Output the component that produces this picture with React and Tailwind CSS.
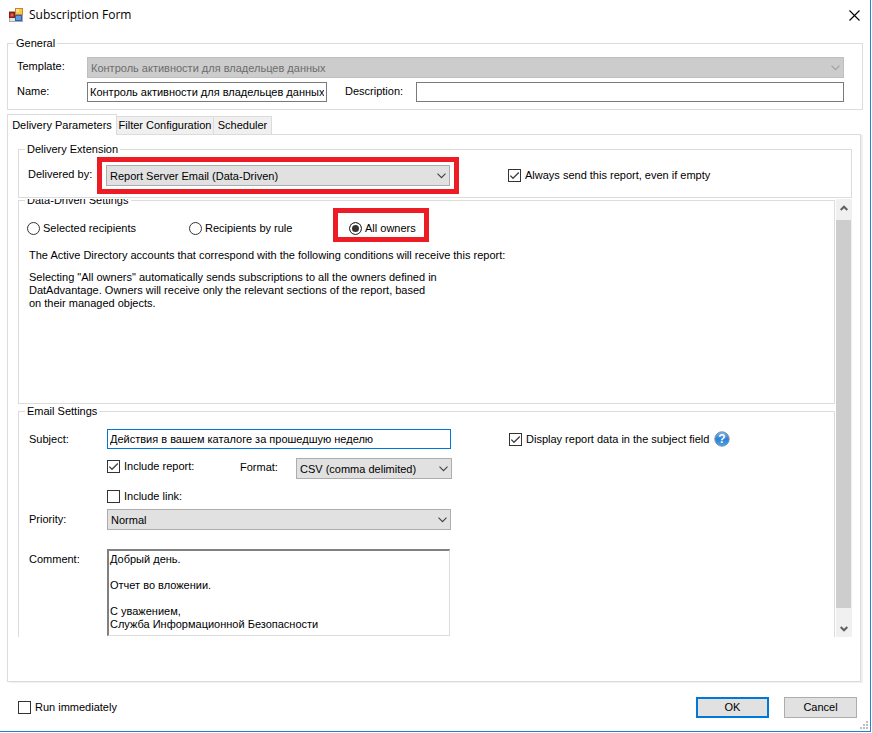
import React, { useState } from 'react';

const Chevron = ({ className }) => (
  <svg viewBox="0 0 9 6" fill="none" strokeWidth="1.1" className={`pointer-events-none absolute top-1/2 right-[4px] h-[6px] w-[9px] -translate-y-1/2 ${className}`}>
    <path d="M0.5 0.7 L4.5 4.7 L8.5 0.7" />
  </svg>
);

const Select = ({ id, options, disabled, className = '' }) => (
  <div className={`relative h-[21px] ${className}`}>
    <select
      id={id}
      disabled={disabled}
      className="block h-full w-full appearance-none border border-[#adadad] bg-[#e1e1e1] pt-[1px] pr-5 pl-[3px] text-black disabled:border-[#bfbfbf] disabled:bg-[#cccccc] disabled:text-[#6d6d6d] disabled:opacity-100"
    >
      {options.map((option) => (
        <option key={option}>{option}</option>
      ))}
    </select>
    <Chevron className={disabled ? 'stroke-[#a0a0a0]' : 'stroke-[#404040]'} />
  </div>
);

const Checkbox = ({ label, defaultChecked }) => (
  <label className="flex items-center gap-[4px] whitespace-nowrap">
    <span className="relative block size-[13px] shrink-0">
      <input type="checkbox" defaultChecked={defaultChecked} className="peer block size-[13px] appearance-none border border-[#333333] bg-white" />
      <svg viewBox="0 0 13 13" fill="none" stroke="#404040" strokeWidth="1.3" className="pointer-events-none absolute inset-0 hidden peer-checked:block">
        <path d="M2.3 6.6 L5 9.3 L10.8 3.5" />
      </svg>
    </span>
    {label}
  </label>
);

const Radio = ({ label, value, selected, onSelect, className = '', children }) => (
  <label className={`flex items-center gap-[3px] whitespace-nowrap ${className}`}>
    <input
      type="radio"
      name="recipients"
      checked={selected === value}
      onChange={() => onSelect(value)}
      className="block size-[13px] shrink-0 appearance-none rounded-full border border-[#333333] bg-white checked:bg-[#333333] checked:shadow-[inset_0_0_0_2px_#ffffff]"
    />
    {label}
    {children}
  </label>
);

const Group = ({ title, className = '', bodyClassName = '', children }) => (
  <fieldset className={`min-w-0 border border-[#dcdcdc] ${className}`}>
    <legend className="ml-[6px] h-[13px] px-[2px] leading-[13px]">{title}</legend>
    <div className={bodyClassName}>{children}</div>
  </fieldset>
);

const AppIcon = () => (
  <svg viewBox="0 0 14 14" className="size-[14px] shrink-0">
    <rect x="0.5" y="3.5" width="13" height="10" fill="#e4e4e4" stroke="#a9a9a9" />
    <rect x="0" y="4" width="6" height="6" fill="#8e1c10" />
    <rect x="1.5" y="5.5" width="3" height="3" fill="#e0654a" />
    <rect x="6" y="0" width="8" height="7" fill="#c98a1b" />
    <rect x="7" y="1" width="6" height="5" fill="#fbc54e" />
    <rect x="7" y="1" width="3" height="3" fill="#fde08f" />
    <rect x="6" y="7" width="7" height="6" fill="#2a62b4" />
    <rect x="7" y="8" width="5" height="4" fill="#5c9ae6" />
  </svg>
);

const HelpIcon = () => (
  <svg viewBox="0 0 16 16" className="size-[16px] shrink-0">
    <defs>
      <linearGradient id="helpFill" x1="0" y1="0" x2="0" y2="1">
        <stop offset="0" stopColor="#7fb8ee" />
        <stop offset="0.5" stopColor="#2f7fd3" />
        <stop offset="1" stopColor="#3fa9f5" />
      </linearGradient>
    </defs>
    <circle cx="8" cy="8" r="7.2" fill="url(#helpFill)" stroke="#7d8fa3" strokeWidth="1" />
    <text x="8" y="12.2" textAnchor="middle" fontSize="12" fontWeight="700" fill="#ffffff">?</text>
  </svg>
);

const tabs = [
  { name: 'Delivery Parameters', width: 'w-[110px]' },
  { name: 'Filter Configuration', width: 'w-[97px]' },
  { name: 'Scheduler', width: 'w-[58px]' },
];

const comment = 'Добрый день.\n\nОтчет во вложении.\n\nС уважением,\nСлужба Информационной Безопасности';

const App = () => {
  const [tab, setTab] = useState('Delivery Parameters');
  const [recipients, setRecipients] = useState('owners');

  return (
    <div className="h-screen min-h-[520px] bg-white pr-[1px] pb-[1px] font-['Liberation_Sans',Arial,sans-serif] text-[11px] leading-[13px] text-black">
      <div className="flex h-full flex-col border-r border-b border-[#1883d7]">
        <header className="flex h-[30px] shrink-0 items-center justify-between pr-[10px] pl-[9px]">
          <div className="flex items-center gap-[6px]">
            <AppIcon />
            <h1 className="font-['Open_Sans','Noto_Sans',sans-serif] text-[12px] leading-[16px]">Subscription Form</h1>
          </div>
          <button type="button" aria-label="Close" className="block size-[11px]">
            <svg viewBox="0 0 11 11" stroke="#000000" strokeWidth="1.1" className="block size-[11px]">
              <path d="M0.5 0.5 L10.5 10.5 M10.5 0.5 L0.5 10.5" />
            </svg>
          </button>
        </header>

        <form className="flex min-h-0 flex-1 flex-col pt-[7px]" onSubmit={(e) => e.preventDefault()}>
          <Group title="General" className="mx-[7px] shrink-0" bodyClassName="pt-[7px] pr-[18px] pb-[7px] pl-[9px]">
            <div className="flex">
              <label htmlFor="template" className="w-[70px] shrink-0 pt-[3px]">Template:</label>
              <Select id="template" disabled className="flex-1" options={['Контроль активности для владельцев данных']} />
            </div>
            <div className="mt-[4px] flex">
              <label htmlFor="name" className="w-[70px] shrink-0 pt-[3px]">Name:</label>
              <input id="name" defaultValue="Контроль активности для владельцев данных" className="h-[20px] w-[240px] border border-[#7a7a7a] px-[2px]" />
              <label htmlFor="description" className="ml-[18px] w-[71px] shrink-0 pt-[3px]">Description:</label>
              <input id="description" className="h-[20px] min-w-0 flex-1 border border-[#7a7a7a] px-[2px]" />
            </div>
          </Group>

          <div role="tablist" className="mt-[4px] ml-[7px] flex shrink-0 items-end">
            {tabs.map(({ name, width }) => (
              <button
                key={name}
                type="button"
                role="tab"
                aria-selected={tab === name}
                onClick={() => setTab(name)}
                className={`whitespace-nowrap ${width} ${
                  tab === name
                    ? 'relative -mb-[1px] h-[21px] border border-b-0 border-[#dcdcdc] bg-white'
                    : 'h-[18px] border-t border-r border-[#dcdcdc] bg-[#f0f0f0]'
                }`}
              >
                {name}
              </button>
            ))}
          </div>

          <div role="tabpanel" className="mr-[9px] ml-[7px] flex min-h-0 flex-1 flex-col border border-[#dcdcdc] pt-[8px] pr-[8px] pb-[44px] pl-[10px] shadow-[2px_1px_0_#f0f0f0]">
            <Group title="Delivery Extension" className="shrink-0" bodyClassName="pt-[9px] pb-[11px] pl-[9px]">
              <div className="flex">
                <label htmlFor="delivery" className="w-[78px] shrink-0 pt-[3px]">Delivered by:</label>
                <div className="relative w-[344px]">
                  <Select id="delivery" options={['Report Server Email (Data-Driven)']} />
                  <span className="pointer-events-none absolute -inset-x-[9px] -inset-y-[8px] border-5 border-[#ed1c24]" />
                </div>
                <div className="ml-[58px] flex items-center">
                  <Checkbox label="Always send this report, even if empty" defaultChecked />
                </div>
              </div>
            </Group>

            <div className="mt-[1px] flex min-h-0 flex-1 gap-[1px]">
              <div className="min-w-0 flex-1 overflow-hidden">
                <Group title="Data-Driven Settings" className="-mt-[5px] h-[210px]" bodyClassName="pt-[15px] pl-[8px]">
                  <div className="flex">
                    <Radio label="Selected recipients" value="selected" selected={recipients} onSelect={setRecipients} className="w-[162px]" />
                    <Radio label="Recipients by rule" value="rule" selected={recipients} onSelect={setRecipients} className="w-[160px]" />
                    <Radio label="All owners" value="owners" selected={recipients} onSelect={setRecipients} className="relative">
                      <span className="pointer-events-none absolute -top-[14px] -bottom-[7px] -left-[16px] w-[96px] border-5 border-[#ed1c24]" />
                    </Radio>
                  </div>
                  <p className="mt-[14px] ml-[2px]">The Active Directory accounts that correspond with the following conditions will receive this report:</p>
                  <p className="mt-[9px] ml-[2px]">
                    Selecting "All owners" automatically sends subscriptions to all the owners defined in
                    <br />
                    DatAdvantage. Owners will receive only the relevant sections of the report, based
                    <br />
                    on their managed objects.
                  </p>
                </Group>

                <Group title="Email Settings" className="mt-[1px] h-[260px]" bodyClassName="pt-[11px] pl-[10px]">
                  <div className="flex">
                    <label htmlFor="subject" className="w-[78px] shrink-0 pt-[4px]">Subject:</label>
                    <input id="subject" defaultValue="Действия в вашем каталоге за прошедшую неделю" className="h-[20px] w-[344px] border border-[#0078d7] px-[2px]" />
                    <div className="ml-[58px] flex items-center gap-[5px]">
                      <Checkbox label="Display report data in the subject field" defaultChecked />
                      <HelpIcon />
                    </div>
                  </div>
                  <div className="mt-[9px] flex pl-[78px]">
                    <div className="w-[133px] pt-[2px]">
                      <Checkbox label="Include report:" defaultChecked />
                    </div>
                    <label htmlFor="format" className="w-[56px] pt-[3px]">Format:</label>
                    <Select id="format" className="w-[156px]" options={['CSV (comma delimited)']} />
                  </div>
                  <div className="mt-[11px] flex pl-[78px]">
                    <Checkbox label="Include link:" />
                  </div>
                  <div className="mt-[6px] flex">
                    <label htmlFor="priority" className="w-[78px] shrink-0 pt-[4px]">Priority:</label>
                    <Select id="priority" className="w-[344px]" options={['Normal', 'High', 'Low']} />
                  </div>
                  <div className="mt-[19px] flex">
                    <label htmlFor="comment" className="w-[78px] shrink-0 pt-[4px]">Comment:</label>
                    <textarea
                      id="comment"
                      defaultValue={comment}
                      className="h-[87px] w-[343px] resize-none overflow-hidden border-t-2 border-r border-b border-l-2 border-t-[#808080] border-r-[#dcdcdc] border-b-[#dcdcdc] border-l-[#808080] pt-[2px] pl-[1px] leading-[13px]"
                    />
                  </div>
                </Group>
              </div>

              <div className="flex w-[16px] shrink-0 flex-col bg-[#f0f0f0]">
                <button type="button" aria-label="Scroll up" className="flex h-[21px] items-center justify-center pb-[3px]">
                  <svg viewBox="0 0 8 6" fill="none" stroke="#606060" strokeWidth="2" className="h-[6px] w-[8px]">
                    <path d="M0.7 5 L4 1.7 L7.3 5" />
                  </svg>
                </button>
                <div className="mr-[1px] flex-1 bg-[#cdcdcd]" />
                <button type="button" aria-label="Scroll down" className="flex h-[29px] items-center justify-center pt-[13px]">
                  <svg viewBox="0 0 8 6" fill="none" stroke="#606060" strokeWidth="2" className="h-[6px] w-[8px]">
                    <path d="M0.7 1 L4 4.3 L7.3 1" />
                  </svg>
                </button>
              </div>
            </div>
          </div>

          <footer className="relative flex shrink-0 items-center justify-between pt-[15px] pr-[13px] pb-[13px] pl-[18px]">
            <Checkbox label="Run immediately" />
            <div className="flex gap-[15px]">
              <button type="submit" className="h-[21px] w-[73px] border-2 border-[#0078d7] bg-[#e1e1e1]">OK</button>
              <button type="button" className="h-[21px] w-[73px] border border-[#adadad] bg-[#e1e1e1]">Cancel</button>
            </div>
            <svg viewBox="0 0 8 8" fill="#bfbfbf" className="absolute right-[2px] bottom-[2px] size-[8px]">
              <path d="M6 0h2v2H6z M3 3h2v2H3z M6 3h2v2H6z M0 6h2v2H0z M3 6h2v2H3z M6 6h2v2H6z" />
            </svg>
          </footer>
        </form>
      </div>
    </div>
  );
};

export default App;
